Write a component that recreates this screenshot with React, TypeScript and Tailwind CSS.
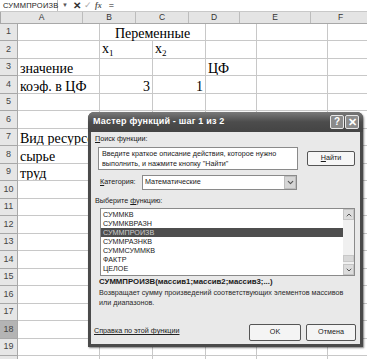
import { ChevronDown, ChevronUp } from "lucide-react";

const rowHeights = [
  "h-[17px]", "h-[18px]", "h-[17px]", "h-[18px]", "h-[17px]",
  "h-[18px]", "h-[17px]", "h-[18px]", "h-[17px]", "h-[18px]",
  "h-[17px]", "h-[18px]", "h-[17px]", "h-[18px]", "h-[17px]",
  "h-[18px]", "h-[17px]", "h-[18px]", "h-[17px]", "h-[18px]",
];

const colW = ["w-[82px]", "w-[53px]", "w-[53px]", "w-[51px]", "w-[71px]", "w-[60px]"];
const colNames = ["A", "B", "C", "D", "E", "F"];

type Cell = { text?: React.ReactNode; right?: boolean };

const Sub = ({ n }: { n: string }) => (
  <span className="relative top-[3px] text-[9px] leading-none">{n}</span>
);

const data: Record<number, Cell[]> = {
  2: [{}, { text: <>x<Sub n="1" /></> }, { text: <>x<Sub n="2" /></> }],
  3: [{ text: "значение" }, {}, {}, { text: "ЦФ" }],
  4: [{ text: "коэф. в ЦФ" }, { text: "3", right: true }, { text: "1", right: true }],
  7: [{ text: "Вид ресурсов" }],
  8: [{ text: "сырье" }],
  9: [{ text: "труд" }],
};

function FormulaBar() {
  return (
    <div className="flex h-[12px] items-center bg-white text-[#222] border-b border-[#c8c8c8]">
      <div className="w-[58px] h-full flex items-center pl-[3px] text-[7.5px] tracking-[0.2px] border-r border-[#bdbdbd]">
        СУММПРОИЗВ
      </div>
      <div className="w-[14px] flex justify-center text-[6px] text-[#555]">▼</div>
      <div className="flex items-center gap-[3px] ml-[1px]">
        <span className="text-[10px] font-bold text-[#333] leading-none">✕</span>
        <span className="text-[9px] text-[#aaa] leading-none">✓</span>
        <span className="text-[8px] italic font-bold text-[#555] leading-none font-['Liberation_Serif']">fx</span>
      </div>
      <div className="ml-[7px] text-[9px] leading-none">=</div>
    </div>
  );
}

function Header() {
  return (
    <div className="flex h-[12px] bg-[#e4e4e4] border-b border-[#a8a8a8] text-[8.5px] text-[#333]">
      <div className="w-[18px] border-r border-[#a8a8a8]" />
      {colNames.map((c, i) => (
        <div key={c} className={`${colW[i]} shrink-0 flex items-center justify-center border-r border-[#bcbcbc]`}>
          {c}
        </div>
      ))}
    </div>
  );
}

function Row({ n }: { n: number }) {
  const cells = data[n] ?? [];
  return (
    <div className={`flex ${rowHeights[n - 1]}`}>
      <div
        className={`w-[18px] shrink-0 flex items-center justify-center text-[9px] text-[#444] border-r border-b border-[#a8a8a8] ${
          n === 18 ? "bg-[#b4b4b4]" : "bg-[#e6e6e6]"
        }`}
      >
        {n < 20 ? n : ""}
      </div>
      {n === 1 ? (
        <>
          <div className={`${colW[0]} shrink-0 border-r border-b border-[#c8c8c8]`} />
          <div className="w-[106px] shrink-0 flex items-end justify-center border-r border-b border-[#c8c8c8] font-['Liberation_Serif'] text-[14px] leading-[13px] text-black">
            Переменные
          </div>
          {[3, 4, 5].map((i) => (
            <div key={i} className={`${colW[i]} shrink-0 border-r border-b border-[#c8c8c8]`} />
          ))}
        </>
      ) : (
        colNames.map((c, i) => {
          const cell = cells[i] ?? {};
          return (
            <div
              key={c}
              className={`${colW[i]} shrink-0 flex items-end px-[2px] whitespace-nowrap overflow-hidden border-r border-b border-[#c8c8c8] font-['Liberation_Serif'] text-[14px] leading-[13px] text-black ${
                cell.right ? "justify-end" : "justify-start"
              }`}
            >
              <span className={n === 2 ? "-translate-y-[3px]" : ""}>{cell.text}</span>
            </div>
          );
        })
      )}
    </div>
  );
}

const functions = ["СУММКВ", "СУММКВРАЗН", "СУММПРОИЗВ", "СУММРАЗНКВ", "СУММСУММКВ", "ФАКТР", "ЦЕЛОЕ"];

function Dialog() {
  return (
    <div className="absolute left-[88px] top-[112px] w-[275px] h-[235px] flex flex-col bg-[#4a4a4a] rounded-t-[6px] shadow-[1px_1px_2px_rgba(0,0,0,0.5)] font-['Liberation_Sans'] text-[7.2px] text-[#1a1a1a] whitespace-nowrap">
      <div className="h-[20px] shrink-0 flex items-center justify-between pl-[5px] pr-[4px] rounded-t-[6px] bg-linear-to-b from-[#7a7a7a] via-[#4c4c4c] to-[#444]">
        <span className="text-white font-bold text-[9px] tracking-[0.2px]">Мастер функций - шаг 1 из 2</span>
        <div className="flex gap-[1px]">
          <div className="w-[14px] h-[14px] rounded-[2px] border border-[#e8e8e8] bg-[#8a8a8a] flex items-center justify-center text-white font-bold text-[10px] leading-none">
            ?
          </div>
          <div className="w-[14px] h-[14px] rounded-[2px] border border-[#e8e8e8] bg-[#8c8c8c] flex items-center justify-center text-white font-bold text-[11px] leading-none">
            ✕
          </div>
        </div>
      </div>
      <div className="flex-1 mx-[3px] mb-[3px] bg-[#e9e9e9] flex flex-col pl-[4px] pr-[4px]">
        <div className="mt-[2px] h-[10px] leading-[10px]">
          <u>П</u>оиск функции:
        </div>
        <div className="flex mt-[3px] ml-[3px] items-start">
          <div className="w-[200px] h-[23px] bg-white border border-[#8a8a8a] px-[3px] pt-[1px] leading-[10px]">
            Введите краткое описание действия, которое нужно
            <br />
            выполнить, и нажмите кнопку "Найти"
          </div>
          <div className="ml-[9px] mt-[4px] w-[48px] h-[15px] rounded-[2px] border border-[#555] bg-[#f6f6f6] flex items-center justify-center">
            <span>
              <u>Н</u>айти
            </span>
          </div>
        </div>
        <div className="flex items-center mt-[5px] ml-[5px] h-[15px]">
          <span className="w-[42px]">
            <u>К</u>атегория:
          </span>
          <div className="w-[155px] h-[15px] bg-white border border-[#8a8a8a] flex items-center justify-between pl-[2px]">
            <span>Математические</span>
            <div className="w-[12px] h-[13px] bg-[#d6d6d6] border border-[#bdbdbd] flex items-center justify-center">
              <ChevronDown size={9} strokeWidth={3} color="#555" />
            </div>
          </div>
        </div>
        <div className="mt-[6px] h-[10px] leading-[10px]">
          Выберите <u>ф</u>ункцию:
        </div>
        <div className="mt-[2px] ml-[5px] w-[255px] h-[68px] bg-white border border-[#8a8a8a] flex">
          <div className="flex-1 pt-[1px]">
            {functions.map((f, i) => (
              <div
                key={f}
                className={`h-[9px] leading-[9px] pl-[2px] ${i === 2 ? "bg-[#4e4e4e] text-[#cfcfcf]" : ""}`}
              >
                {f}
              </div>
            ))}
          </div>
          <div className="w-[11px] bg-[#f0f0f0] flex flex-col justify-between">
            <div className="h-[11px] bg-[#dcdcdc] border border-[#c4c4c4] flex items-center justify-center">
              <ChevronUp size={8} strokeWidth={3} color="#555" />
            </div>
            <div className="flex flex-col gap-[2px]">
              <div className="h-[7px] bg-[#d8d8d8] border border-[#c8c8c8]" />
              <div className="h-[11px] bg-[#dcdcdc] border border-[#c4c4c4] flex items-center justify-center">
                <ChevronDown size={8} strokeWidth={3} color="#555" />
              </div>
            </div>
          </div>
        </div>
        <div className="mt-[1px] ml-[4px] h-[10px] leading-[10px] font-bold text-[7.8px]">
          СУММПРОИЗВ(массив1;массив2;массив3;...)
        </div>
        <div className="mt-[1px] ml-[4px] leading-[10px] text-[#2a2a2a]">
          Возвращает сумму произведений соответствующих элементов массивов
          <br />
          или диапазонов.
        </div>
        <div className="mt-auto mb-[3px] flex items-end justify-between">
          <span className="underline text-[#222] mb-[4px] -ml-[1px]">Справка по этой функции</span>
          <div className="flex gap-[5px]">
            <div className="w-[52px] h-[17px] rounded-[2px] border border-[#555] bg-[#f4f4f4] flex items-center justify-center">
              OK
            </div>
            <div className="w-[50px] h-[17px] rounded-[2px] border border-[#555] bg-[#f4f4f4] flex items-center justify-center">
              Отмена
            </div>
          </div>
        </div>
      </div>
    </div>
  );
}

export default function App() {
  return (
    <div className="relative w-[367px] h-[359px] overflow-hidden bg-white font-['Liberation_Sans']">
      <FormulaBar />
      <Header />
      {Array.from({ length: 20 }, (_, i) => (
        <Row key={i} n={i + 1} />
      ))}
      <Dialog />
    </div>
  );
}
